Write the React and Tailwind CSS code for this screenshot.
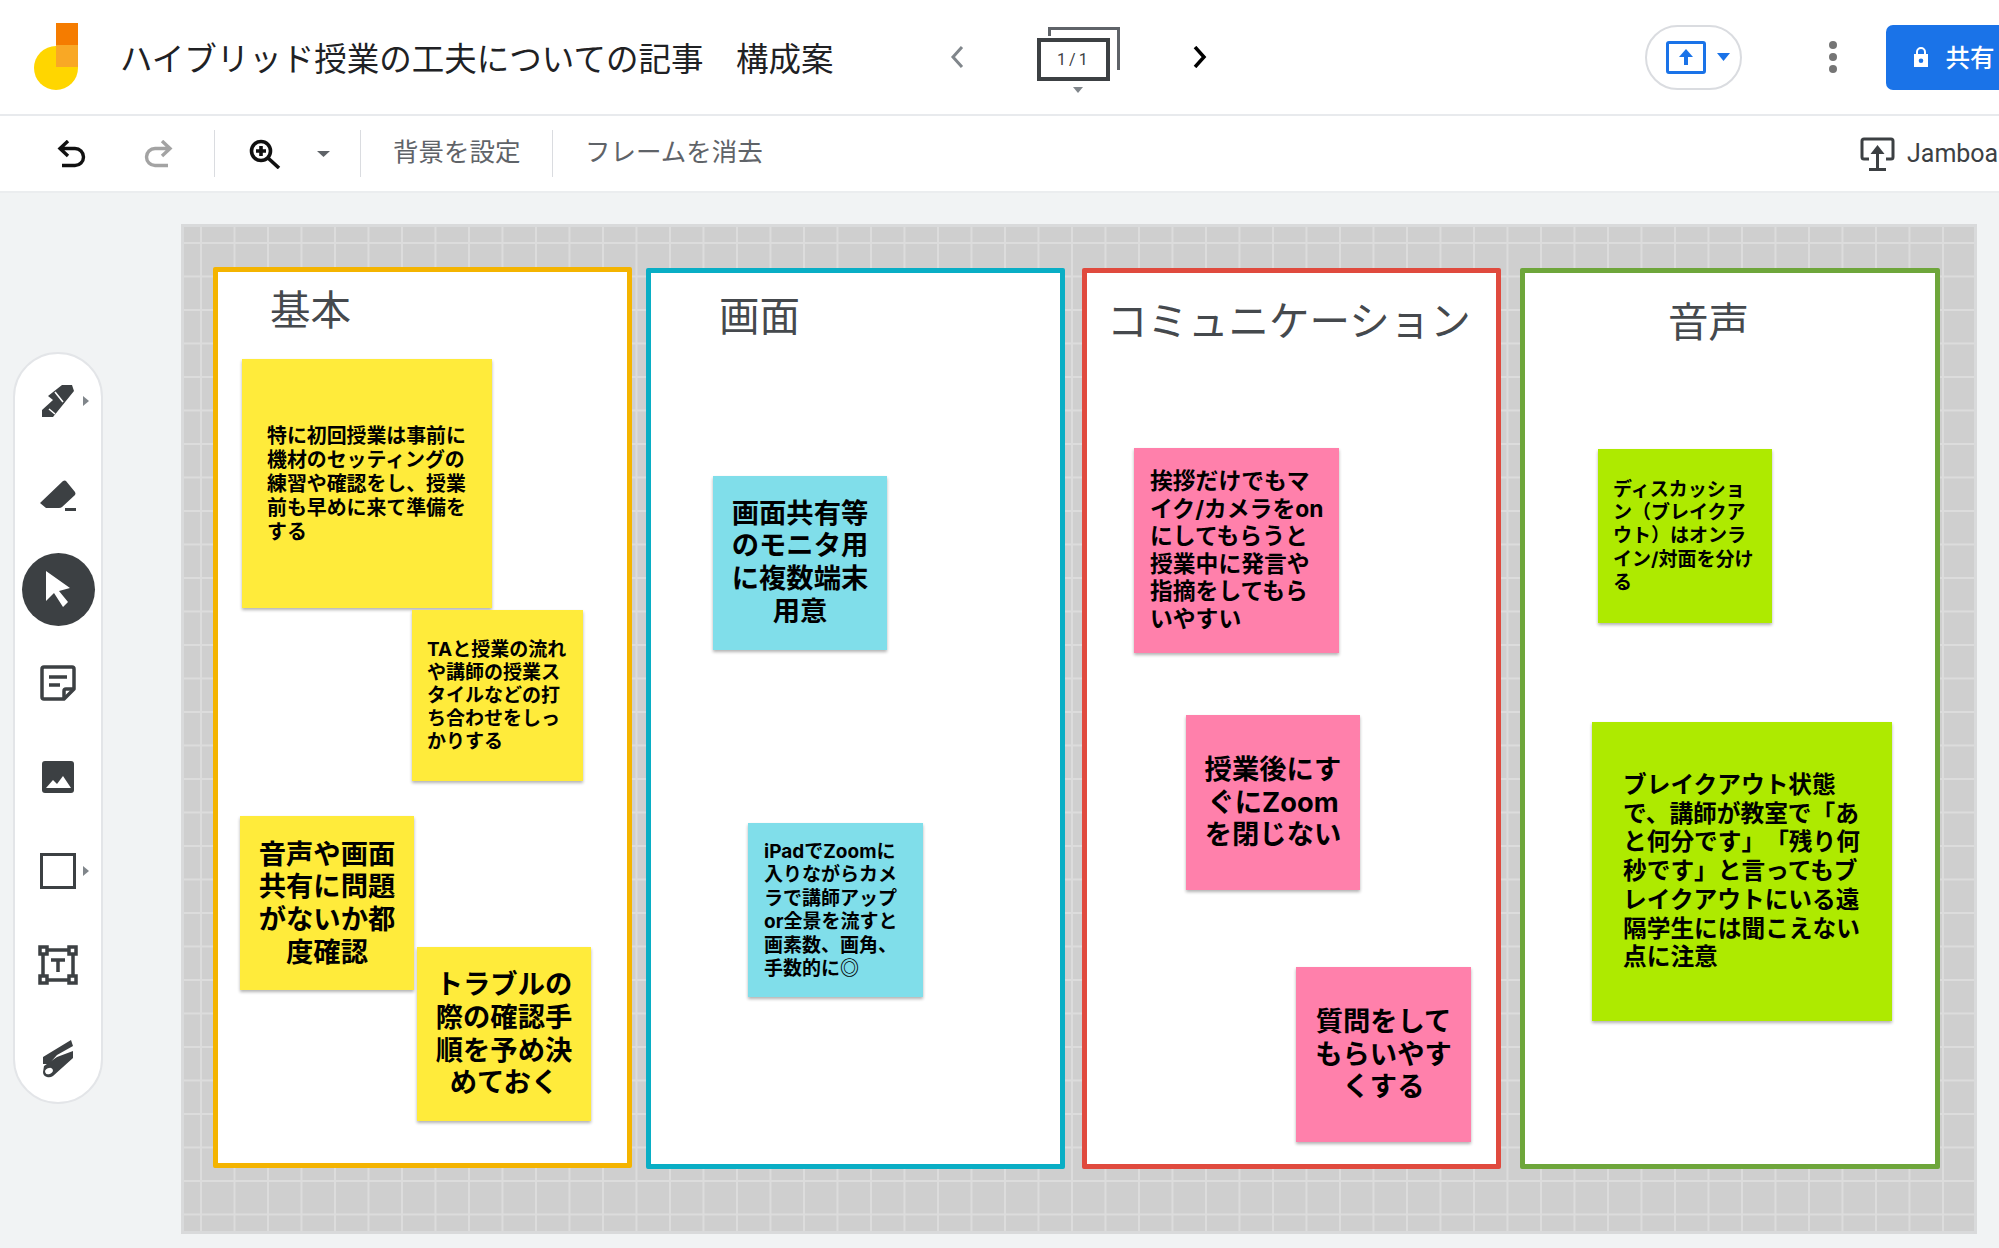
import React from 'react';

const frames = [
  { title: '基本', box: 'left-[32px] top-[43px] w-[419px] h-[901px] border-[#f4b400]', head: 'left-[52px] top-[16px]' },
  { title: '画面', box: 'left-[465px] top-[44px] w-[419px] h-[901px] border-[#09aec5]', head: 'left-[68px] top-[21px]' },
  { title: 'コミュニケーション', box: 'left-[901px] top-[44px] w-[419px] h-[901px] border-[#e04a3e]', head: 'left-[20px] top-[26px]' },
  { title: '音声', box: 'left-[1339px] top-[44px] w-[420px] h-[901px] border-[#6ea63b]', head: 'left-[143px] top-[27px]' },
];

const notes = [
  { box: 'left-[61px] top-[135px] w-[250px] h-[249px] bg-[#ffeb3b] pl-[25px] text-[19.9px] leading-[24px]', lines: ['特に初回授業は事前に', '機材のセッティングの', '練習や確認をし、授業', '前も早めに来て準備を', 'する'] },
  { box: 'left-[231px] top-[386px] w-[171px] h-[171px] bg-[#ffeb3b] pl-[15px] text-[19px] leading-[23px]', lines: ['TAと授業の流れ', 'や講師の授業ス', 'タイルなどの打', 'ち合わせをしっ', 'かりする'] },
  { box: 'left-[59px] top-[592px] w-[174px] h-[174px] bg-[#ffeb3b] pt-[2px] text-center text-[27.3px] leading-[32.6px]', lines: ['音声や画面', '共有に問題', 'がないか都', '度確認'] },
  { box: 'left-[236px] top-[723px] w-[174px] h-[174px] bg-[#ffeb3b] pt-[1px] text-center text-[27.3px] leading-[32.6px]', lines: ['トラブルの', '際の確認手', '順を予め決', 'めておく'] },
  { box: 'left-[532px] top-[252px] w-[174px] h-[174px] bg-[#80deea] text-center text-[27.3px] leading-[32.6px]', lines: ['画面共有等', 'のモニタ用', 'に複数端末', '用意'] },
  { box: 'left-[567px] top-[599px] w-[175px] h-[174px] bg-[#80deea] pl-[16px] text-[19px] leading-[23.5px]', lines: ['iPadでZoomに', '入りながらカメ', 'ラで講師アップ', 'or全景を流すと', '画素数、画角、', '手数的に◎'] },
  { box: 'left-[953px] top-[224px] w-[205px] h-[205px] bg-[#ff80ab] pl-[16px] pb-[2px] text-[22.8px] leading-[27.5px]', lines: ['挨拶だけでもマ', 'イク/カメラをon', 'にしてもらうと', '授業中に発言や', '指摘をしてもら', 'いやすい'] },
  { box: 'left-[1005px] top-[491px] w-[174px] h-[175px] bg-[#ff80ab] pt-[1px] text-center text-[27.3px] leading-[32.6px]', lines: ['授業後にす', 'ぐにZoom', 'を閉じない'] },
  { box: 'left-[1115px] top-[743px] w-[175px] h-[175px] bg-[#ff80ab] pt-[1px] text-center text-[27.3px] leading-[32.6px]', lines: ['質問をして', 'もらいやす', 'くする'] },
  { box: 'left-[1417px] top-[225px] w-[174px] h-[174px] bg-[#aeea00] pl-[15px] text-[19px] leading-[23.3px]', lines: ['ディスカッショ', 'ン（ブレイクア', 'ウト）はオンラ', 'イン/対面を分け', 'る'] },
  { box: 'left-[1411px] top-[498px] w-[300px] h-[299px] bg-[#aeea00] pl-[31px] text-[23.7px] leading-[28.8px]', lines: ['ブレイクアウト状態', 'で、講師が教室で「あ', 'と何分です」「残り何', '秒です」と言ってもブ', 'レイクアウトにいる遠', '隔学生には聞こえない', '点に注意'] },
];

const Triangle = ({ className }) => (
  <svg viewBox="0 0 12 8" preserveAspectRatio="none" className={className} fill="currentColor"><path d="M0 0h12L6 8z" /></svg>
);

const SideArrow = () => (
  <svg viewBox="0 0 6 10" className="absolute left-[68px] top-1/2 -mt-[5px] w-[6px] h-[10px] text-[#80868b]" fill="currentColor"><path d="M0 0l6 5-6 5z" /></svg>
);

const tools = [
  {
    more: true,
    icon: (
      <svg viewBox="0 0 32 32" className="w-[32px] h-[32px]" fill="#3c4043">
        <path d="M0 32v-7l11-10-5-4L20 0h10l2 6-21 26z" />
        <path d="M13 7l8 10M7 24l6 5" stroke="#fff" strokeWidth="1.6" fill="none" />
      </svg>
    ),
  },
  {
    icon: (
      <svg viewBox="0 0 36 31" className="w-[36px] h-[31px]" fill="#3c4043">
        <path d="M0 23L23 1q2-1 3 0l9 11q1 2 0 3L22 27q-1 1-3 1H6z" />
        <rect x="25" y="28" width="11" height="3" />
      </svg>
    ),
  },
  {
    active: true,
    icon: (
      <svg viewBox="0 0 24 36" className="w-[24px] h-[36px]" fill="#fff">
        <path d="M0 0l24 17-11 3 9 11-5 5-9-14-8 8z" />
      </svg>
    ),
  },
  {
    icon: (
      <svg viewBox="0 0 36 36" className="w-[36px] h-[36px]" fill="none" stroke="#3c4043" strokeWidth="3.5">
        <path d="M24 34H4q-2 0-2-2V4q0-2 2-2h28q2 0 2 2v20L24 34z" strokeLinejoin="round" />
        <path d="M24 34v-8q0-2 2-2h8M9 12h18M9 20h11" />
      </svg>
    ),
  },
  {
    icon: (
      <svg viewBox="0 0 32 32" className="w-[32px] h-[32px]">
        <rect width="32" height="32" rx="3" fill="#3c4043" />
        <path d="M4 27l7-8 4 4 6-8 8 12z" fill="#fff" />
      </svg>
    ),
  },
  {
    more: true,
    icon: <div className="w-[36px] h-[36px] border-[3.5px] border-[#3c4043]" />,
  },
  {
    icon: (
      <svg viewBox="0 0 40 40" className="w-[40px] h-[40px]" fill="none" stroke="#3c4043" strokeWidth="3.5">
        <path d="M9 5h22M9 35h22M5 9v22M35 9v22" />
        <rect x="2" y="2" width="7" height="7" />
        <rect x="31" y="2" width="7" height="7" />
        <rect x="2" y="31" width="7" height="7" />
        <rect x="31" y="31" width="7" height="7" />
        <path d="M13 15h14M20 15v12" />
      </svg>
    ),
  },
  {
    icon: (
      <svg viewBox="0 0 30 38" className="w-[30px] h-[38px]">
        <path d="M0 17L28 0l2 6-16 9-8 9H0z" fill="#3c4043" />
        <path d="M1 26l13-9 16-6v7L10 36q-3 2-6 1-4-1-4-5z" fill="#3c4043" />
        <ellipse cx="6" cy="31" rx="4" ry="3" fill="#fff" transform="rotate(-25 6 31)" />
      </svg>
    ),
  },
];

const App = () => {
  return (
    <div className="w-screen h-screen flex flex-col overflow-hidden bg-[#f1f3f4] text-[#3c4043] font-['Inter','Noto_Sans_CJK_JP',sans-serif]">
      <header className="h-[116px] shrink-0 bg-white border-b-2 border-[#e8eaed] flex items-center relative">
        <svg viewBox="0 0 44 67" className="ml-[34px] w-[44px] h-[67px] shrink-0 -mt-[2px]">
          <circle cx="22" cy="45" r="22" fill="#ffd600" />
          <rect x="22" y="0" width="22" height="22" fill="#f57c00" />
          <rect x="22" y="22" width="22" height="22" fill="#f9a825" />
        </svg>
        <h1 className="ml-[42px] w-[761px] text-[32.5px] leading-none font-normal text-[#202124] whitespace-pre font-['Noto_Sans_CJK_JP',sans-serif]">ハイブリッド授業の工夫についての記事　構成案</h1>
        <svg viewBox="0 0 14 22" className="ml-[117px] w-[14px] h-[22px] shrink-0" fill="none" stroke="#80868b" strokeWidth="3"><path d="M12 1L3 11l9 10" /></svg>
        <div className="relative ml-[73px] w-[84px] h-[66px] shrink-0">
          <div className="absolute left-[11px] top-[3px] w-[72px] h-[43px] border-t-[3px] border-r-[3px] border-[#5f6368]">
            <div className="absolute left-0 top-0 w-[3px] h-[6px] bg-[#5f6368]" />
          </div>
          <div className="absolute left-0 top-[14px] w-[73px] h-[43px] bg-white border-[4px] border-[#3c4043] flex items-center justify-center text-[16px] tracking-[3px] text-[#3c4043] font-['Roboto',sans-serif]">1/1</div>
          <Triangle className="absolute left-[36px] top-[63px] w-[10px] h-[6px] text-[#80868b]" />
        </div>
        <svg viewBox="0 0 14 22" className="ml-[72px] w-[14px] h-[22px] shrink-0" fill="none" stroke="#000" strokeWidth="3.5"><path d="M2 1l9 10-9 10" /></svg>
        <div className="ml-[438px] w-[97px] h-[65px] shrink-0 rounded-full border-2 border-[#dadce0] flex items-center pl-[19px]">
          <div className="w-[40px] h-[33px] border-[3px] border-[#1a73e8] rounded-[3px] flex items-center justify-center">
            <svg viewBox="0 0 14 16" className="w-[14px] h-[16px]" fill="#1a73e8"><path d="M7 0l7 8H9v8H5V8H0z" /></svg>
          </div>
          <Triangle className="ml-[11px] w-[13px] h-[8px] text-[#1a73e8]" />
        </div>
        <div className="ml-[87px] flex flex-col gap-[4px] shrink-0">
          <span className="w-[8px] h-[8px] rounded-full bg-[#757575]" />
          <span className="w-[8px] h-[8px] rounded-full bg-[#757575]" />
          <span className="w-[8px] h-[8px] rounded-full bg-[#757575]" />
        </div>
        <div className="ml-[49px] w-[140px] h-[65px] shrink-0 bg-[#1a73e8] rounded-l-[7px] flex items-center pl-[27px] text-white text-[24.5px] font-medium font-['Noto_Sans_CJK_JP',sans-serif]">
          <svg viewBox="0 0 16 20" className="w-[16px] h-[20px] shrink-0" fill="#fff">
            <path d="M13 7V5a5 5 0 0 0-10 0v2H1v13h14V7zM5 5a3 3 0 0 1 6 0v2H5zm3 11a2.3 2.3 0 1 1 0-4.6A2.3 2.3 0 0 1 8 16z" />
          </svg>
          <span className="ml-[16px] whitespace-nowrap">共有</span>
        </div>
      </header>

      <div className="h-[77px] shrink-0 bg-white border-b-2 border-[#ebedef] flex items-center relative text-[#5f6368] font-['Noto_Sans_CJK_JP',sans-serif]">
        <svg viewBox="0 0 30 28" className="ml-[57px] w-[30px] h-[28px] shrink-0" fill="none" stroke="#111" strokeWidth="3.4"><path d="M11 1L3 8.5l8 7.5M3 8.5h15a8.2 8.2 0 0 1 0 17H5" /></svg>
        <svg viewBox="0 0 30 28" className="ml-[56px] w-[30px] h-[28px] shrink-0 -scale-x-100" fill="none" stroke="#a3a3a3" strokeWidth="3.4"><path d="M11 1L3 8.5l8 7.5M3 8.5h15a8.2 8.2 0 0 1 0 17H5" /></svg>
        <div className="ml-[41px] w-px h-[47px] bg-[#dadce0] shrink-0" />
        <svg viewBox="0 0 32 30" className="ml-[34px] w-[32px] h-[30px] shrink-0" fill="none" stroke="#111" strokeWidth="3.6">
          <circle cx="12" cy="12" r="9.5" />
          <path d="M19 19l11 10M12 7v10M7 12h10" />
        </svg>
        <Triangle className="ml-[36px] w-[13px] h-[6px] shrink-0 text-[#5f6368]" />
        <div className="ml-[30px] w-px h-[47px] bg-[#dadce0] shrink-0" />
        <span className="ml-[32px] w-[127px] shrink-0 text-[25.5px] leading-none -mt-[8px] whitespace-nowrap">背景を設定</span>
        <div className="ml-[32px] w-px h-[47px] bg-[#dadce0] shrink-0" />
        <span className="ml-[32px] w-[176px] shrink-0 text-[25.5px] leading-none -mt-[8px] whitespace-nowrap">フレームを消去</span>
        <svg viewBox="0 0 35 34" className="ml-[1099px] w-[35px] h-[34px] shrink-0" fill="none" stroke="#3c4043" strokeWidth="3">
          <path d="M9 22H4q-2 0-2-2V4q0-2 2-2h27q2 0 2 2v16q0 2-2 2h-5" />
          <path d="M17.5 32V15" />
          <path d="M17.5 8l7 9h-14z" fill="#3c4043" stroke="none" />
          <path d="M9 32.5h17" strokeWidth="3" />
        </svg>
        <span className="ml-[12px] text-[25px] leading-none text-[#3c4043] font-['Roboto',sans-serif] whitespace-nowrap">Jamboard</span>
      </div>

      <main className="flex-1 flex items-start min-h-0">
        <aside className="ml-[13px] mt-[159px] w-[90px] h-[752px] shrink-0 bg-white border-2 border-[#e3e5e8] rounded-[45px] flex flex-col">
          {tools.map((tool, i) => (
            <div key={i} className="relative h-[94px] shrink-0 flex items-center justify-center">
              {tool.active ? (
                <div className="w-[73px] h-[73px] rounded-full bg-[#3c4043] flex items-center justify-center">{tool.icon}</div>
              ) : (
                tool.icon
              )}
              {tool.more && <SideArrow />}
            </div>
          ))}
        </aside>

        <div className="relative ml-[78px] mt-[31px] w-[1796px] h-[1010px] shrink-0 bg-[#cfcfcf] bg-[linear-gradient(to_right,#dcdcdc_2px,transparent_2px),linear-gradient(to_bottom,#dcdcdc_2px,transparent_2px)] bg-[size:33.5px_33.5px] bg-[position:19px_18px] shadow-[inset_0_0_0_3px_#d9dadb]">
          {frames.map((frame) => (
            <section key={frame.title} className={`absolute bg-white border-[5px] rounded-[2px] ${frame.box}`}>
              <h2 className={`absolute text-[40.5px] leading-none font-normal text-[#45494d] whitespace-nowrap font-['Noto_Sans_CJK_JP',sans-serif] ${frame.head}`}>{frame.title}</h2>
            </section>
          ))}
          {notes.map((note) => (
            <div key={note.lines[0]} className={`absolute flex flex-col justify-center font-bold text-black whitespace-nowrap [text-spacing-trim:space-all] shadow-[0_2px_3px_rgba(0,0,0,0.3)] ${note.box}`}>
              {note.lines.map((line) => (
                <div key={line}>{line}</div>
              ))}
            </div>
          ))}
        </div>
      </main>
    </div>
  );
};

export default App;
